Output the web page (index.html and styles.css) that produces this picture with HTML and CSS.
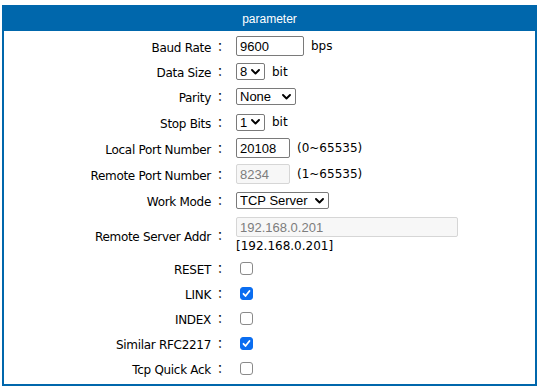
FILE: index.html
```html
<!DOCTYPE html>
<html lang="en">
<head>
  <meta charset="UTF-8">
  <title>Serial Parameter</title>
  <link rel="stylesheet" href="styles.css">
</head>
<body>
  <div class="panel">
    <div class="panel-title">parameter</div>
    <div class="form">
      <label class="label">Baud Rate<span class="colon">：</span></label>
      <div class="value"><input class="text w-68" type="text" value="9600"><span>bps</span></div>

      <label class="label">Data Size<span class="colon">：</span></label>
      <div class="value"><select class="pick w-29"><option>8</option></select><span>bit</span></div>

      <label class="label">Parity<span class="colon">：</span></label>
      <div class="value"><select class="pick w-60"><option>None</option></select></div>

      <label class="label">Stop Bits<span class="colon">：</span></label>
      <div class="value"><select class="pick w-29"><option>1</option></select><span>bit</span></div>

      <label class="label">Local Port Number<span class="colon">：</span></label>
      <div class="value"><input class="text w-54" type="text" value="20108"><span>(0~65535)</span></div>

      <label class="label">Remote Port Number<span class="colon">：</span></label>
      <div class="value"><input class="text w-54" type="text" value="8234" disabled><span>(1~65535)</span></div>

      <label class="label">Work Mode<span class="colon">：</span></label>
      <div class="value"><select class="pick w-93"><option>TCP Server</option></select></div>

      <label class="label">Remote Server Addr<span class="colon">：</span></label>
      <div class="value stack">
        <input class="text w-222" type="text" value="192.168.0.201" disabled>
        <span>[192.168.0.201]</span>
      </div>

      <label class="label">RESET<span class="colon">：</span></label>
      <div class="value"><input class="check" type="checkbox"></div>

      <label class="label">LINK<span class="colon">：</span></label>
      <div class="value"><input class="check" type="checkbox" checked></div>

      <label class="label">INDEX<span class="colon">：</span></label>
      <div class="value"><input class="check" type="checkbox"></div>

      <label class="label">Similar RFC2217<span class="colon">：</span></label>
      <div class="value"><input class="check" type="checkbox" checked></div>

      <label class="label">Tcp Quick Ack<span class="colon">：</span></label>
      <div class="value"><input class="check" type="checkbox"></div>
    </div>
  </div>
</body>
</html>
```

FILE: styles.css
```css
* {
  box-sizing: border-box;
}

body {
  margin: 5px 0 0 2px;
  font-family: "DejaVu Sans", "Noto Sans CJK JP", sans-serif;
  font-size: 12px;
  color: #000;
  background: #fff;
}

.panel {
  width: 535px;
  border: 2px solid #0067ac;
}

.panel-title {
  height: 24px;
  line-height: 24px;
  background: #0067ac;
  color: #fff;
  text-align: center;
  font-family: "Liberation Sans", Arial, sans-serif;
  font-size: 12px;
}

.form {
  display: grid;
  grid-template-columns: 222px 1fr;
  grid-template-rows: 26px 25px 25px 26px 26px 26px 27px 42px repeat(5, 25px);
  column-gap: 10px;
  padding: 2px 0 3px;
}

.label {
  align-self: center;
  text-align: right;
  letter-spacing: -0.3px;
  white-space: nowrap;
}

.colon {
  margin-left: 3px;
  font-family: "Noto Sans CJK JP", sans-serif;
  letter-spacing: 0;
}

.value {
  display: flex;
  align-items: center;
  gap: 7px;
}

.value.stack {
  flex-direction: column;
  align-items: flex-start;
  justify-content: center;
  gap: 2px;
}

.text {
  height: 20px;
  margin: 0;
  padding: 0 3px;
  border: 1px solid #7a7a7a;
  border-radius: 2px;
  font-family: "Liberation Sans", Arial, sans-serif;
  font-size: 13px;
  color: #000;
  background: #fff;
}

.text:disabled {
  background: #f7f7f7;
  border-color: #d6d6d6;
  color: #7d7d7d;
}

.pick {
  appearance: none;
  -webkit-appearance: none;
  height: 17px;
  margin: 0;
  padding: 0 14px 0 3px;
  border: 1px solid #7a7a7a;
  border-radius: 2px;
  font-family: "Liberation Sans", Arial, sans-serif;
  font-size: 13px;
  line-height: 15px;
  color: #000;
  background: #fff url("data:image/svg+xml;utf8,<svg xmlns='http://www.w3.org/2000/svg' width='9' height='6' viewBox='0 0 9 6'><path d='M1 1l3.5 3.5L8 1' fill='none' stroke='%23000' stroke-width='1.9' stroke-linecap='round' stroke-linejoin='round'/></svg>") no-repeat right 4px center;
}

.w-29 { width: 29px; }
.w-54 { width: 54px; }
.w-60 { width: 60px; }
.w-68 { width: 68px; }
.w-93 { width: 93px; }
.w-222 { width: 222px; }

.check {
  appearance: none;
  -webkit-appearance: none;
  width: 13px;
  height: 13px;
  margin: 0 0 0 4px;
  border: 1px solid #8a8a8a;
  border-radius: 3px;
  background: #fff;
}

.check:checked {
  border-color: #0a6df0;
  background: #0a6df0 url("data:image/svg+xml;utf8,<svg xmlns='http://www.w3.org/2000/svg' width='11' height='11' viewBox='0 0 11 11'><path d='M2.5 5.8l2 2.2 4-5' fill='none' stroke='%23fff' stroke-width='1.8' stroke-linecap='round' stroke-linejoin='round'/></svg>") no-repeat center;
}
```
